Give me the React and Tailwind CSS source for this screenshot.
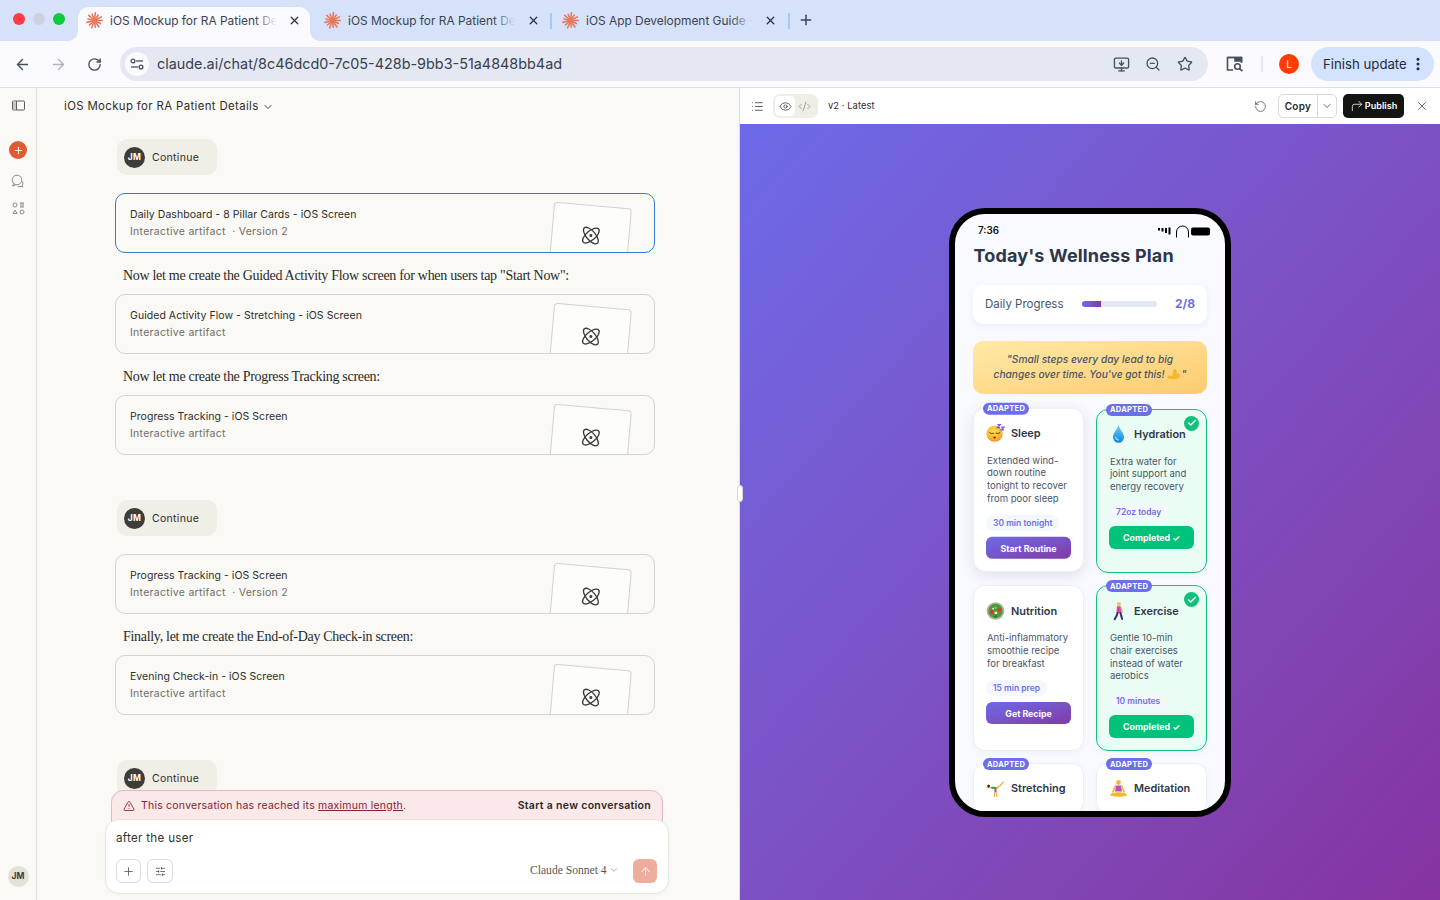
import React from "react";
import { ArrowLeft, ArrowRight, RotateCw, MonitorDown, ZoomOut, Star, X, Plus, ChevronDown, List, Eye, CodeXml, RotateCcw, CornerUpRight, TriangleAlert, ArrowUp, Atom, SlidersHorizontal, Check, EllipsisVertical } from "lucide-react";

const Burst = ({ className = "" }) => (
  <svg viewBox="0 0 20 20" className={className} width="17" height="17">
    {Array.from({ length: 13 }).map((_, i) => {
      const a = (i / 13) * Math.PI * 2;
      const r = i % 2 ? 7.8 : 9.2;
      return <line key={i} x1="10" y1="10" x2={10 + Math.cos(a) * r} y2={10 + Math.sin(a) * r} stroke="#e9795d" strokeWidth="1.9" strokeLinecap="round" />;
    })}
  </svg>
);

const Tab = ({ active, title, w, closeGap, tw = "w-[167px]" }) => (
  <div className={`relative flex items-center h-[34px] pb-[7px] ${w} ${active ? "bg-[#fbfaff] rounded-t-[11px]" : ""}`}>
    {active && (
      <>
        <svg className="absolute -left-[10px] bottom-0" width="10" height="10"><path d="M10 0V10H0A10 10 0 0 0 10 0Z" fill="#fbfaff" /></svg>
        <svg className="absolute -right-[10px] bottom-0" width="10" height="10"><path d="M0 0V10H10A10 10 0 0 1 0 0Z" fill="#fbfaff" /></svg>
      </>
    )}
    <Burst className="ml-[8px] shrink-0" />
    <div className={`relative ml-[7px] overflow-hidden whitespace-nowrap text-[11.9px] leading-[14px] text-[#3c4350] ${tw}`}>
      {title}
      <div className={`absolute right-0 top-0 bottom-0 w-[22px] bg-gradient-to-r from-transparent ${active ? "to-[#fbfaff]" : "to-[#d6e2fa]"}`} />
    </div>
    <X size={13} strokeWidth={2.4} className={`absolute ${closeGap} text-[#2b3240]`} />
  </div>
);

const Artifact = ({ title, sub, selected }) => (
  <div className={`relative h-[60px] w-[540px] overflow-hidden rounded-[10px] border bg-[#faf9f5] ${selected ? "border-[#2f7fd6]" : "border-[#d5d3cb]"}`}>
    <div className="pl-[14px] pt-[12px] text-[10.5px]">
      <div className="leading-[17px] tracking-[0.05px] text-[#2e2d29]">{title}</div>
      <div className="whitespace-pre leading-[17px] tracking-[0.28px] text-[#6f6e68]">{sub}</div>
    </div>
    <div className="absolute left-[435px] top-[11px] flex h-[70px] w-[78px] rotate-[5deg] items-start justify-center rounded-[4px] border border-[#d3d1c9] bg-[#fdfdfb] pt-[19px]">
      <Atom size={21} strokeWidth={1.5} className="text-[#3b3a36]" />
    </div>
  </div>
);

const Say = ({ children }) => (
  <div className="flex h-[41px] items-center pl-[8px] pt-[3px] [font-family:'Liberation_Serif',serif] text-[14px] tracking-[-0.3px] text-[#2b2a26]">{children}</div>
);

const Pill = ({ className = "" }) => (
  <div className={`ml-[2px] flex h-[36px] w-[100px] items-center gap-[7px] rounded-[10px] bg-[#efeee7] pl-[7px] text-[10.5px] tracking-[0.3px] text-[#2e2d29] ${className}`}>
    <div className="flex h-[21px] w-[21px] items-center justify-center rounded-full bg-[#3d3c37] text-[8.5px] font-bold text-white">JM</div>
    <span className="pt-[1px]">Continue</span>
  </div>
);

const EmojiSleep = () => (
  <svg width="20" height="20" viewBox="0 0 20 20">
    <defs><radialGradient id="sl" cx="45%" cy="35%" r="70%"><stop offset="0%" stopColor="#ffe04d" /><stop offset="70%" stopColor="#fbb32c" /><stop offset="100%" stopColor="#f27b1a" /></radialGradient></defs>
    <circle cx="9" cy="11" r="8.5" fill="url(#sl)" />
    <path d="M4 10q2 1.5 4 .5M10.5 10.5q2 1 4-.5" stroke="#5b3a10" strokeWidth="1" fill="none" strokeLinecap="round" />
    <ellipse cx="9" cy="15" rx="1.5" ry="1" fill="#6b3a12" />
    <path d="M12 1.5h3l-3 3h3M16 4h3l-3 3h3" stroke="#6d5be0" strokeWidth="1.3" fill="none" />
  </svg>
);
const EmojiDrop = () => (
  <svg width="20" height="20" viewBox="0 0 20 20">
    <defs><linearGradient id="dr" x1="0" y1="0" x2="0" y2="1"><stop offset="0%" stopColor="#6fd0f7" /><stop offset="100%" stopColor="#0a84e0" /></linearGradient></defs>
    <path d="M10 .5C8.4 5.5 4.2 9.5 4.2 13.4a5.8 5.8 0 0 0 11.6 0C15.8 9.5 11.6 5.5 10 .5Z" fill="url(#dr)" />
    <path d="M7 13.5a3 3 0 0 0 3 3" stroke="#d8f3ff" strokeWidth="1" fill="none" strokeLinecap="round" />
  </svg>
);
const EmojiSalad = () => (
  <svg width="20" height="20" viewBox="0 0 20 20">
    <circle cx="10" cy="10" r="9.3" fill="#a9b4a4" />
    <circle cx="10" cy="10" r="7.6" fill="#4e9a37" />
    <circle cx="6" cy="11" r="2" fill="#e0372d" /><circle cx="14" cy="9" r="2" fill="#e0372d" />
    <circle cx="10" cy="6.5" r="1.3" fill="#8bc34a" /><circle cx="10.5" cy="12" r="1.5" fill="#f2f2ea" /><circle cx="7.5" cy="7.5" r="1" fill="#f2f2ea" /><circle cx="10" cy="15.5" r="1.3" fill="#2f7a26" />
  </svg>
);
const EmojiWalk = () => (
  <svg width="20" height="20" viewBox="0 0 20 20">
    <circle cx="10.5" cy="2.6" r="2.1" fill="#f2c14e" />
    <path d="M8.4 5h4l1 7H7.8Z" fill="#d946a8" />
    <path d="M12.6 6l1.5 5" stroke="#f2b97a" strokeWidth="1.4" strokeLinecap="round" />
    <path d="M9 12 8 15l-2 3.6M12 12l1 3.4.8 3" stroke="#3f2f6e" strokeWidth="2.1" fill="none" strokeLinecap="round" />
  </svg>
);
const EmojiCart = () => (
  <svg width="22" height="20" viewBox="0 0 22 20">
    <path d="M1 8.5h6" stroke="#f0b45a" strokeWidth="1.5" strokeLinecap="round" />
    <circle cx="3" cy="6.6" r="1.6" fill="#222" />
    <path d="M7 8.5 12 9" stroke="#2da44e" strokeWidth="2.4" strokeLinecap="round" />
    <path d="M12 9l4.5-3 3.5-4" stroke="#e8b03d" strokeWidth="1.5" fill="none" strokeLinecap="round" />
    <path d="M11 10v4" stroke="#d63c8f" strokeWidth="2.4" />
    <path d="M10 14v5M12.5 14v5" stroke="#e6a93a" strokeWidth="1.3" />
  </svg>
);
const EmojiMed = () => (
  <svg width="22" height="21" viewBox="0 0 22 21">
    <circle cx="11" cy="3.6" r="2.8" fill="#f2b83a" />
    <path d="M8 7h6l1 7H7Z" fill="#b650c8" />
    <path d="M7.6 7.2 4.5 14.5M14.4 7.2l3.1 7.3" stroke="#f3bb3c" strokeWidth="2" strokeLinecap="round" />
    <path d="M1 18c2.5-4.4 17.5-4.4 20 0-2 2.6-18 2.6-20 0Z" fill="#f4b52f" />
  </svg>
);
const EmojiArm = () => (
  <svg className="inline-block align-[-2px]" width="14" height="12" viewBox="0 0 14 12">
    <path d="M7.5 1c-1.4.8-1.5 2.2-1.2 3.2L4.8 8 1 7.6c-1 1.6.2 3.4 2 3.4h5.2c3 0 4.8-1.6 4.8-3.6 0-1.4-1.5-2.4-3.2-2.2L9.4 2.6C9.4 1.4 8.4.6 7.5 1Z" fill="#f5b72d" />
  </svg>
);

const Wcard = ({ emoji, name, desc, tag, cta, done, badge = true, hover }) => (
  <div className={`relative flex flex-col rounded-[12px] px-[12px] pb-[12px] ${done ? "border-[1.5px] border-[#10c07b] bg-[#e9fdf4] px-[11.5px]" : "border border-[#edeff6] bg-white"} ${hover ? "-translate-y-[1.2px] shadow-[0_4px_14px_rgba(60,60,90,0.12)]" : "shadow-[0_2px_6px_rgba(90,100,150,0.05)]"}`}>
    {badge && <div className="absolute -top-[6px] left-[9px] flex h-[12px] w-[46px] items-center justify-center rounded-[6px] bg-[#6c6fe8] text-[7.5px] font-bold tracking-[0.3px] text-white">ADAPTED</div>}
    {done && (
      <div className="absolute right-[7px] top-[6px] flex h-[15px] w-[15px] items-center justify-center rounded-full bg-[#10c07b]">
        <Check size={10} strokeWidth={3.2} className="text-white" />
      </div>
    )}
    <div className="mt-[12px] flex h-[25px] items-center gap-[6px]">
      <div className="flex w-[19px] shrink-0 items-center justify-center">{emoji}</div>
      <div className="text-[10.9px] font-semibold text-[#2d3748]">{name}</div>
    </div>
    {desc && (
      <>
        <div className="ml-[1px] mt-[9px] text-[9.55px] leading-[12.7px] text-[#4a5568]">{desc}</div>
        <div className="mt-[10px] self-start rounded-[8px] bg-[#f4f7fe] px-[7px] text-[8.5px] font-semibold leading-[16px] text-[#6e6fe8]">{tag}</div>
        {done ? (
          <div className="mt-[6px] flex h-[23px] items-center justify-center rounded-[6px] bg-[#00c27a] text-[8.8px] font-bold text-white">Completed ✓</div>
        ) : (
          <div className="mt-[6px] flex h-[22px] items-center justify-center rounded-[6px] bg-gradient-to-br from-[#6c6ae8] to-[#7f3aa5] text-[8.8px] font-bold text-white">{cta}</div>
        )}
      </>
    )}
  </div>
);

function Phone() {
  return (
    <div className="h-[609px] w-[282px] overflow-hidden rounded-[36px] border-[6px] border-black bg-[#f8faff] [font-family:Inter,sans-serif]">
      <div className="flex h-[22px] items-end justify-between pl-[23px] pr-[14px]">
        <div className="text-[9.8px] font-semibold leading-none text-[#111]">7:36</div>
        <svg width="53" height="13" viewBox="0 0 53 13" className="-mb-[2px]">
          <rect x="0" y="3" width="2" height="2.5" fill="#000" /><rect x="3.5" y="3" width="2" height="3.5" fill="#000" /><rect x="7" y="3" width="2" height="5" fill="#000" /><rect x="10.5" y="2.5" width="2" height="7" fill="#000" />
          <path d="M18.5 12.5V7a6 6 0 0 1 12 0v5.5" stroke="#000" strokeWidth="1" fill="none" />
          <rect x="33" y="2.5" width="19" height="8" rx="2" fill="#000" />
        </svg>
      </div>
      <div className="mt-[9px] px-[18px]">
        <div className="pl-[0.5px] text-[18px] font-bold leading-[22px] tracking-[0.15px] text-[#2d3748]">Today's Wellness Plan</div>
        <div className="mt-[18px] flex h-[39px] items-center rounded-[10px] bg-white pl-[12px] pr-[12px] shadow-[0_2px_6px_rgba(90,100,150,0.08)]">
          <div className="w-[97px] pt-[1px] text-[11.5px] text-[#4a5568]">Daily Progress</div>
          <div className="h-[6px] w-[75px] overflow-hidden rounded-full bg-[#e2e8f0]">
            <div className="h-full w-1/4 bg-gradient-to-r from-[#6c6ae8] to-[#7f3aa5]" />
          </div>
          <div className="ml-auto text-[12px] font-bold text-[#6e6fe8]">2/8</div>
        </div>
        <div className="mt-[17px] flex h-[53px] items-center justify-center rounded-[10px] bg-gradient-to-br from-[#ffeaa7] to-[#fdcb6e] text-center text-[10.2px] font-medium italic leading-[15px] text-[#4a5568]">
          <div>"Small steps every day lead to big<br />changes over time. You've got this! <EmojiArm />"</div>
        </div>
        <div className="mt-[15px] grid grid-cols-2 gap-x-[12px] gap-y-[12px]">
          <Wcard hover emoji={<EmojiSleep />} name="Sleep" desc={<>Extended wind-<br />down routine<br />tonight to recover<br />from poor sleep</>} tag="30 min tonight" cta="Start Routine" />
          <Wcard done emoji={<EmojiDrop />} name="Hydration" desc={<>Extra water for<br />joint support and<br />energy recovery</>} tag="72oz today" />
          <Wcard badge={false} emoji={<EmojiSalad />} name="Nutrition" desc={<>Anti-inflammatory<br />smoothie recipe<br />for breakfast</>} tag="15 min prep" cta="Get Recipe" />
          <Wcard done emoji={<EmojiWalk />} name="Exercise" desc={<>Gentle 10-min<br />chair exercises<br />instead of water<br />aerobics</>} tag="10 minutes" />
          <Wcard emoji={<EmojiCart />} name="Stretching" />
          <Wcard emoji={<EmojiMed />} name="Meditation" />
        </div>
      </div>
    </div>
  );
}

export default function App() {
  return (
    <div className="flex h-[900px] w-[1440px] flex-col overflow-hidden bg-[#faf9f5] [font-family:Inter,sans-serif]">
      {/* tab strip */}
      <div className="relative flex h-[41px] shrink-0 items-end bg-[#d6e2fa] pl-[78px]">
        <div className="absolute left-[13px] top-[13px] flex gap-[8px]">
          <div className="h-[12px] w-[12px] rounded-full bg-[#ff3b45]" />
          <div className="h-[12px] w-[12px] rounded-full bg-[#ccd2dd]" />
          <div className="h-[12px] w-[12px] rounded-full bg-[#0ccb3f]" />
        </div>
        <Tab active title="iOS Mockup for RA Patient Details" w="w-[232px]" closeGap="right-[9.5px]" />
        <div className="w-[6px]" />
        <Tab title="iOS Mockup for RA Patient Details" w="w-[234px]" closeGap="right-[10.5px]" />
        <div className="mb-[12px] h-[16px] w-[2px] bg-[#a9c7f5]" />
        <div className="w-[2px]" />
        <Tab title="iOS App Development Guide - Claude" w="w-[234px]" closeGap="right-[11.5px]" tw="w-[167px]" />
        <div className="mb-[12px] h-[16px] w-[2px] bg-[#a9c7f5]" />
        <Plus size={16} strokeWidth={2.2} className="mb-[13px] ml-[8px] text-[#3c4350]" />
      </div>
      {/* toolbar */}
      <div className="flex h-[46px] shrink-0 items-center bg-[#fbfaff] pl-[14px] pr-[6px]">
        <ArrowLeft size={17} strokeWidth={2} className="text-[#474f5e]" />
        <ArrowRight size={17} strokeWidth={2} className="ml-[19px] text-[#aeb2bd]" />
        <RotateCw size={15} strokeWidth={2.2} className="ml-[20px] text-[#474f5e]" />
        <div className="ml-[18px] flex h-[34px] w-[1089px] items-center rounded-full bg-[#e4e8f3] pl-[5px] pr-[15px]">
          <div className="flex h-[24px] w-[24px] items-center justify-center rounded-full bg-[#fbfaff]">
            <svg width="14" height="12" viewBox="0 0 14 12" fill="none" stroke="#474f5e" strokeWidth="1.3"><circle cx="3" cy="3" r="1.9" /><path d="M6 3h7" /><circle cx="11" cy="9" r="1.9" /><path d="M1 9h7" /></svg>
          </div>
          <div className="ml-[8px] text-[14.4px] text-[#39404d]">claude.ai/chat/8c46dcd0-7c05-428b-9bb3-51a4848bb4ad</div>
          <MonitorDown size={17} strokeWidth={1.9} className="ml-auto text-[#474f5e]" />
          <ZoomOut size={16} strokeWidth={1.9} className="ml-[15px] text-[#474f5e]" />
          <Star size={16} strokeWidth={1.9} className="ml-[16px] text-[#474f5e]" />
        </div>
        <svg width="18" height="16" viewBox="0 0 18 16" className="ml-[18px]" fill="none" stroke="#474f5e" strokeWidth="1.6">
          <path d="M7 14H1.5V1.5h14V7" /><path d="M1.5 1.5h14V5H9V1.5Z" fill="#474f5e" /><circle cx="11.5" cy="10.5" r="2.8" /><path d="M13.6 12.6 16.5 15.2" />
        </svg>
        <div className="ml-[17px] h-[16px] w-[2px] bg-[#dde5f6]" />
        <div className="ml-[16px] flex h-[20px] w-[20px] items-center justify-center rounded-full bg-[#ff3d00] text-[10px] text-white">L</div>
        <div className="ml-[12px] flex h-[34px] w-[123px] items-center rounded-full bg-[#d3e3fd] pl-[12px] text-[13.2px] text-[#1d2a44]">
          <span className="pt-[1px]">Finish update</span>
          <EllipsisVertical size={16} strokeWidth={2.6} className="ml-[3px] text-[#1d2a44]" />
        </div>
      </div>
      {/* body */}
      <div className="flex min-h-0 flex-1 border-t border-[#dedde3]">
        <div className="relative flex w-[740px] shrink-0 border-r border-[#dedde3]">
          {/* rail */}
          <div className="flex w-[37px] shrink-0 flex-col items-center border-r border-[#e0dfd8] pt-[12px]">
            <svg width="13" height="11" viewBox="0 0 13 11" fill="none" stroke="#5e5d58" strokeWidth="1"><rect x=".5" y="1" width="12" height="9" rx="1" /><path d="M4.5 1v9" /><rect x="1" y="1.5" width="3" height="8" fill="#c9c8c1" stroke="none" /></svg>
            <div className="mt-[30px] flex h-[18px] w-[18px] items-center justify-center rounded-full bg-[#e05a33]">
              <Plus size={11} strokeWidth={2.4} className="text-[#fbe8e0]" />
            </div>
            <svg width="14" height="14" viewBox="0 0 14 14" className="mt-[15px]" fill="none" stroke="#8d8c85" strokeWidth="1"><circle cx="6" cy="6" r="4.8" /><path d="M2.5 9.5 1.8 12l2.6-1M11.5 7.5a3.5 3.5 0 0 1-.3 4l.8 1.2-2-.3a3.5 3.5 0 0 1-3.2 0" /></svg>
            <svg width="13" height="13" viewBox="0 0 13 13" className="mt-[14px]" fill="none" stroke="#8d8c85" strokeWidth="1"><circle cx="3" cy="3" r="2" /><path d="M8 1h4M8 5h4M9 1v4M11 1v4" /><path d="M3 7.5 5 11H1Z" transform="translate(0 .5)" /><circle cx="10" cy="10" r="2" /></svg>
            <div className="mt-auto mb-[13px] flex h-[21px] w-[21px] items-center justify-center rounded-full bg-[#e3e2d9] text-[8.5px] font-bold text-[#3d3c37]">JM</div>
          </div>
          {/* chat */}
          <div className="min-w-0 flex-1">
            <div className="flex h-[36px] items-center pl-[27px] pt-[1px] text-[11.4px] tracking-[0.37px] text-[#2e2d29]">
              iOS Mockup for RA Patient Details
              <ChevronDown size={12} strokeWidth={2} className="ml-[3px] text-[#3d3c37]" />
            </div>
            <div className="pl-[78px] pt-[15px]">
              <Pill />
              <div className="h-[18px]" />
              <Artifact selected title="Daily Dashboard - 8 Pillar Cards - iOS Screen" sub="Interactive artifact  · Version 2" />
              <Say>Now let me create the Guided Activity Flow screen for when users tap "Start Now":</Say>
              <Artifact title="Guided Activity Flow - Stretching - iOS Screen" sub="Interactive artifact" />
              <Say>Now let me create the Progress Tracking screen:</Say>
              <Artifact title="Progress Tracking - iOS Screen" sub="Interactive artifact" />
              <div className="h-[45px]" />
              <Pill />
              <div className="h-[18px]" />
              <Artifact title="Progress Tracking - iOS Screen" sub="Interactive artifact  · Version 2" />
              <Say>Finally, let me create the End-of-Day Check-in screen:</Say>
              <Artifact title="Evening Check-in - iOS Screen" sub="Interactive artifact" />
              <div className="h-[45px]" />
              <Pill />
            </div>
          </div>
          {/* limit banner + composer */}
          <div className="absolute left-[111px] top-[702px] flex h-[40px] w-[552px] items-start justify-between rounded-t-[12px] border border-[#e8b8bd] bg-[#fbe9ea] pl-[11px] pr-[11px] pt-[7px] text-[10.5px]">
            <div className="flex items-center gap-[6px] tracking-[0.22px] text-[#8a2030]">
              <TriangleAlert size={12} strokeWidth={1.7} />
              <span>This conversation has reached its <span className="underline">maximum length</span>.</span>
            </div>
            <div className="font-semibold tracking-[0.3px] text-[#2a2925]">Start a new conversation</div>
          </div>
          <div className="absolute left-[105px] top-[731px] h-[75px] w-[564px] rounded-[14px] border border-[#e8e6df] bg-white shadow-[0_1px_3px_rgba(0,0,0,0.03)]">
            <div className="pl-[10px] pt-[10px] text-[11.6px] tracking-[0.3px] text-[#33322e]">after the user</div>
            <div className="absolute bottom-[10px] left-[10px] flex gap-[6px]">
              <div className="flex h-[24px] w-[25px] items-center justify-center rounded-[6px] border border-[#dcdad3]"><Plus size={13} strokeWidth={1.5} className="text-[#55544e]" /></div>
              <div className="flex h-[24px] w-[26px] items-center justify-center rounded-[6px] border border-[#dcdad3]"><SlidersHorizontal size={11} strokeWidth={1.5} className="text-[#3d3c37]" /></div>
            </div>
            <div className="absolute bottom-[14px] left-[424px] flex items-center gap-[2px] [font-family:'Liberation_Serif',serif] text-[11.6px] text-[#5a5954]">
              Claude Sonnet 4
              <ChevronDown size={10} strokeWidth={1.5} className="text-[#7d7c76]" />
            </div>
            <div className="absolute bottom-[10px] right-[11px] flex h-[24px] w-[24px] items-center justify-center rounded-[6px] bg-[#edac9c]"><ArrowUp size={13} strokeWidth={2} className="text-[#fbe9e2]" /></div>
          </div>
          <div className="absolute -right-[4px] top-[397px] h-[17px] w-[6px] rounded-[3px] border border-[#d7d6cf] bg-white" />
        </div>
        {/* right panel */}
        <div className="flex min-w-0 flex-1 flex-col">
          <div className="flex h-[36px] shrink-0 items-center bg-white pl-[11px] pr-[11px]">
            <List size={13} strokeWidth={1.5} className="text-[#3d3c37]" />
            <div className="ml-[9px] flex h-[24px] w-[45px] items-center rounded-[7px] bg-[#eeede6] pl-[2px]">
              <div className="flex h-[20px] w-[20px] items-center justify-center rounded-[5px] bg-white"><Eye size={13} strokeWidth={1.4} className="text-[#3d3c37]" /></div>
              <CodeXml size={13} strokeWidth={1.4} className="ml-[3px] text-[#8d8c85]" />
            </div>
            <div className="ml-[10px] text-[9.4px] tracking-[0.05px] text-[#2e2d29]">v2 · Latest</div>
            <RotateCcw size={13} strokeWidth={1.3} className="ml-auto text-[#3d3c37]" />
            <div className="ml-[11px] flex h-[24px] w-[59px] items-center rounded-[5px] border border-[#dcdad3] bg-white">
              <div className="flex h-full w-[39px] items-center justify-center border-r border-[#dcdad3] text-[10px] font-semibold tracking-[0.3px] text-[#2a2925]">Copy</div>
              <ChevronDown size={12} strokeWidth={1.6} className="ml-[3px] text-[#3d3c37]" />
            </div>
            <div className="ml-[6px] flex h-[24px] w-[61px] items-center justify-center gap-[1px] rounded-[5px] bg-[#141412] text-[9.1px] font-semibold text-white">
              <CornerUpRight size={14} strokeWidth={1.3} />Publish
            </div>
            <X size={14} strokeWidth={1.3} className="ml-[11px] text-[#3d3c37]" />
          </div>
          <div className="flex min-h-0 flex-1 items-center justify-center bg-gradient-to-br from-[#6c6ae8] to-[#8533a0]">
            <Phone />
          </div>
        </div>
      </div>
    </div>
  );
}
